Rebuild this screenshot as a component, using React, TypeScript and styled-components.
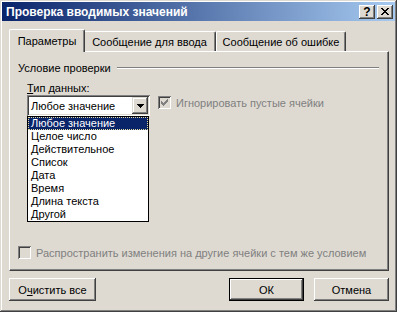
import React from "react";
import styled, { createGlobalStyle, css } from "styled-components";

const Face = "#DEDAD2";
const Shadow = "#808080";
const DarkShadow = "#404040";
const Highlight = "#FFFFFF";

const GlobalStyle = createGlobalStyle`
  html, body {
    margin: 0;
    padding: 0;
    background: ${Face};
  }
  * {
    box-sizing: border-box;
  }
`;

const Window = styled.div`
  width: 397px;
  height: 312px;
  padding: 2px;
  background: ${Face};
  box-shadow: inset -1px -1px 0 ${DarkShadow}, inset 1px 1px 0 ${Face},
    inset -2px -2px 0 ${Shadow}, inset 2px 2px 0 ${Highlight};
  display: flex;
  flex-direction: column;
  font-family: "Liberation Sans", Arial, sans-serif;
  font-size: 11px;
  color: #000;
`;

const TitleBar = styled.div`
  height: 19px;
  flex: none;
  display: flex;
  align-items: center;
  padding: 0 2px 0 4px;
  background: linear-gradient(to right, #0a246a, #a6caf0);
`;

const Title = styled.div`
  flex: 1;
  color: #fff;
  font-weight: bold;
  font-size: 12px;
  white-space: nowrap;
`;

const CaptionButton = styled.div<{ $gap?: number }>`
  width: 16px;
  height: 14px;
  margin-left: ${(p) => p.$gap ?? 0}px;
  background: ${Face};
  box-shadow: inset -1px -1px 0 ${DarkShadow}, inset 1px 1px 0 ${Highlight},
    inset -2px -2px 0 ${Shadow};
  display: flex;
  align-items: center;
  justify-content: center;
  font-weight: bold;
  font-size: 12px;
  line-height: 1;
`;

const Body = styled.div`
  flex: 1;
  display: flex;
  flex-direction: column;
  padding: 8px 6px 9px 7px;
`;

const TabStrip = styled.div`
  height: 22px;
  flex: none;
  display: flex;
  align-items: flex-end;
  padding-left: 2px;
`;

const Tab = styled.div<{ $w: number; $active?: boolean }>`
  position: relative;
  width: ${(p) => p.$w + (p.$active ? 4 : 0)}px;
  height: ${(p) => (p.$active ? 23 : 20)}px;
  margin: 0 ${(p) => (p.$active ? -2 : 0)}px
    ${(p) => (p.$active ? -1 : 0)}px;
  background: ${Face};
  border-left: 1px solid ${Highlight};
  border-top: 1px solid ${Highlight};
  border-right: 1px solid ${DarkShadow};
  border-radius: 2px 2px 0 0;
  box-shadow: inset -1px 0 0 ${Shadow};
  display: flex;
  align-items: center;
  justify-content: center;
  white-space: nowrap;
  padding-top: ${(p) => (p.$active ? 0 : 1)}px;
  ${(p) =>
    p.$active &&
    css`
      z-index: 2;
    `}
`;

const TabPanel = styled.div`
  height: 220px;
  flex: none;
  display: flex;
  flex-direction: column;
  padding: 9px 8px 11px 8px;
  border-left: 1px solid ${Highlight};
  border-top: 1px solid ${Highlight};
  border-right: 1px solid ${DarkShadow};
  border-bottom: 1px solid ${DarkShadow};
  box-shadow: inset -1px -1px 0 ${Shadow};
`;

const GroupHeader = styled.div`
  display: flex;
  align-items: center;
  height: 13px;
  gap: 6px;
`;

const GroupRule = styled.div`
  flex: 1;
  height: 2px;
  border-top: 1px solid ${Shadow};
  border-bottom: 1px solid ${Highlight};
  margin-right: 1px;
`;

const FieldRow = styled.div`
  display: flex;
  align-items: flex-end;
  gap: 8px;
  margin-top: 8px;
  padding-left: 9px;
`;

const Field = styled.div`
  display: flex;
  flex-direction: column;
`;

const Label = styled.div`
  height: 13px;
  line-height: 13px;
  margin-bottom: 0;
`;

const ComboWrap = styled.div`
  position: relative;
  width: 123px;
`;

const Combo = styled.div`
  height: 21px;
  display: flex;
  align-items: center;
  padding: 2px 2px 2px 4px;
  background: #fff;
  box-shadow: inset 1px 1px 0 ${Shadow}, inset -1px -1px 0 ${Highlight},
    inset 2px 2px 0 ${DarkShadow}, inset -2px -2px 0 ${Face};
`;

const ComboText = styled.div`
  flex: 1;
  white-space: nowrap;
`;

const DropButton = styled.div`
  width: 16px;
  height: 17px;
  background: ${Face};
  box-shadow: inset -1px -1px 0 ${DarkShadow}, inset 1px 1px 0 ${Face},
    inset -2px -2px 0 ${Shadow}, inset 2px 2px 0 ${Highlight};
  display: flex;
  align-items: center;
  justify-content: center;
`;

const DropList = styled.div`
  position: absolute;
  top: 100%;
  left: 0;
  width: 122px;
  background: #fff;
  border: 1px solid #000;
  z-index: 5;
`;

const ListItem = styled.div<{ $selected?: boolean }>`
  height: 13px;
  line-height: 11px;
  padding: 0 2px;
  white-space: nowrap;
  border: 1px solid transparent;
  ${(p) =>
    p.$selected &&
    css`
      background: #0a246a;
      color: #fff;
      border: 1px dotted #e6dca0;
    `}
`;

const CheckRow = styled.div<{ $indent?: number; $lift?: number }>`
  display: flex;
  align-items: center;
  gap: 5px;
  height: 13px;
  margin-left: ${(p) => p.$indent ?? 0}px;
  margin-bottom: ${(p) => p.$lift ?? 0}px;
  color: ${Shadow};
  white-space: nowrap;
`;

const CheckBox = styled.div`
  width: 13px;
  height: 13px;
  flex: none;
  background: ${Face};
  box-shadow: inset 1px 1px 0 ${Shadow}, inset -1px -1px 0 ${Highlight},
    inset 2px 2px 0 ${DarkShadow}, inset -2px -2px 0 ${Face};
  display: flex;
  align-items: center;
  justify-content: center;
`;

const Grow = styled.div`
  flex: 1;
`;

const ButtonRow = styled.div`
  display: flex;
  align-items: center;
  gap: 10px;
  margin-top: 7px;
  height: 23px;
`;

const Button = styled.div<{ $w: number; $default?: boolean }>`
  width: ${(p) => p.$w}px;
  height: 23px;
  display: flex;
  align-items: center;
  justify-content: center;
  background: ${Face};
  box-shadow: inset -1px -1px 0 ${DarkShadow}, inset 1px 1px 0 ${Highlight},
    inset -2px -2px 0 ${Shadow};
  ${(p) =>
    p.$default &&
    css`
      border: 1px solid #000;
    `}
`;

const Check = () => (
  <svg width="7" height="7" viewBox="0 0 7 7" shapeRendering="crispEdges">
    <path
      d="M6 0h1v3h-1v1h-1v1h-1v1h-1v1h-1v-1h-1v-1h-1v-3h1v1h1v1h1v-1h1v-1h1z"
      fill={Shadow}
    />
  </svg>
);

const types = [
  "Любое значение",
  "Целое число",
  "Действительное",
  "Список",
  "Дата",
  "Время",
  "Длина текста",
  "Другой",
];

export default function App() {
  return (
    <>
      <GlobalStyle />
      <Window>
        <TitleBar>
          <Title>Проверка вводимых значений</Title>
          <CaptionButton>?</CaptionButton>
          <CaptionButton $gap={2}>
            <svg width="8" height="7" viewBox="0 0 8 7" shapeRendering="crispEdges">
              <path
                d="M0 0h2v1h1v1h2v-1h1v-1h2v1h-1v1h-1v1h-1v1h1v1h1v1h1v1h-2v-1h-1v-1h-2v1h-1v1h-2v-1h1v-1h1v-1h1v-1h-1v-1h-1v-1h-1z"
                fill="#000"
              />
            </svg>
          </CaptionButton>
        </TitleBar>
        <Body>
          <TabStrip>
            <Tab $w={72} $active>
              Параметры
            </Tab>
            <Tab $w={133}>Сообщение для ввода</Tab>
            <Tab $w={130}>Сообщение об ошибке</Tab>
          </TabStrip>
          <TabPanel>
            <GroupHeader>
              <span>Условие проверки</span>
              <GroupRule />
            </GroupHeader>
            <FieldRow>
              <Field>
                <Label>
                  <u>Т</u>ип данных:
                </Label>
                <ComboWrap>
                  <Combo>
                    <ComboText>Любое значение</ComboText>
                    <DropButton>
                      <svg width="7" height="4" viewBox="0 0 7 4" shapeRendering="crispEdges">
                        <path d="M0 0h7v1h-1v1h-1v1h-1v1h-1v-1h-1v-1h-1v-1h-1z" fill="#000" />
                      </svg>
                    </DropButton>
                  </Combo>
                  <DropList>
                    {types.map((t, i) => (
                      <ListItem key={t} $selected={i === 0}>
                        {t}
                      </ListItem>
                    ))}
                  </DropList>
                </ComboWrap>
              </Field>
              <CheckRow $lift={7}>
                <CheckBox>
                  <Check />
                </CheckBox>
                Игнорировать пустые ячейки
              </CheckRow>
            </FieldRow>
            <Grow />
            <CheckRow>
              <CheckBox />
              Распространить изменения на другие ячейки с тем же условием
            </CheckRow>
          </TabPanel>
          <ButtonRow>
            <Button $w={87}>
              О<u>ч</u>истить все
            </Button>
            <Grow />
            <Button $w={75} $default>
              ОК
            </Button>
            <Button $w={75}>Отмена</Button>
          </ButtonRow>
        </Body>
      </Window>
    </>
  );
}
